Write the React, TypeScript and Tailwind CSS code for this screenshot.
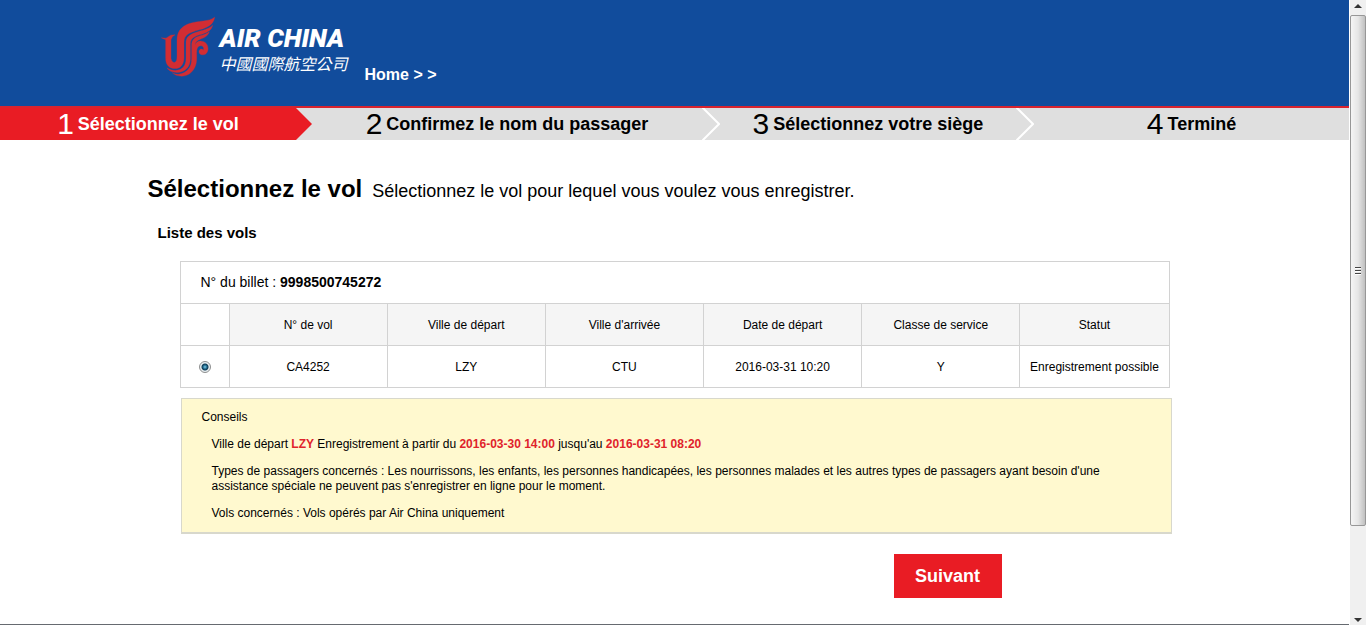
import { useState } from "react"

interface Flight {
  id: string
  from: string
  to: string
  date: string
  cabin: string
  status: string
}

const steps = ["Sélectionnez le vol", "Confirmez le nom du passager", "Sélectionnez votre siège", "Terminé"]

const columns = ["N° de vol", "Ville de départ", "Ville d'arrivée", "Date de départ", "Classe de service", "Statut"]

const flights: Flight[] = [
  { id: "CA4252", from: "LZY", to: "CTU", date: "2016-03-31 10:20", cabin: "Y", status: "Enregistrement possible" },
]

function Phoenix() {
  return (
    <svg
      viewBox="30 50 168 185"
      className="h-[62px] w-14 shrink-0"
      fill="#d22d33"
      stroke="#d22d33"
      strokeWidth="1"
      aria-hidden="true"
    >
      <path d="M34 115 L48 116 L62 107 L75 106 L67 112 L63 121 V176 Q65 189 74 189 Q81 187 81 172 V124 C81 98 92 82 116 73 C146 62 176 68 194 53 C191 74 176 83 148 91 C116 100 103 106 102 128 V176 C101 197 90 207 76 207 C58 207 47 197 47 176 V121 Z" />
      <path d="M188 77 C185 93 170 100 149 106 C128 113 121 119 121 136 V180 C120 204 103 219 81 219 C66 219 56 214 51 205 C59 211 67 213 76 213 C98 212 108 198 108 178 V130 C108 112 118 104 146 96 C166 90 179 86 188 77 Z" />
      <path d="M178 97 C174 110 163 115 151 119 C141 123 136 128 135 136 C138 128 146 124 154 125 C167 126 175 136 174 149 C173 161 165 167 156 166 C149 165 145 158 148 152 C151 147 158 148 160 152 C163 145 159 139 152 139 C142 140 140 149 140 163 V181 C138 212 118 230 95 230 C83 230 73 226 67 220 C73 224 80 225 87 224 C110 221 125 204 125 178 V138 C125 120 134 114 150 109 C162 106 171 102 178 97 Z" />
    </svg>
  )
}

function Header() {
  return (
    <header className="border-b-2 border-[#d9232e] bg-[#114c9c] px-4">
      <div className="mx-auto flex h-[106px] max-w-[1054px] items-start pt-4 pl-3">
        <Phoenix />
        <div className="ml-1 w-[129px] text-white">
          <div className="pt-[9px] font-[Roboto,'Liberation_Sans',sans-serif] text-[26px] leading-[26px] font-black whitespace-nowrap italic">
            AIR CHINA
          </div>
          <div className="font-['Noto_Sans_CJK_TC',sans-serif] text-[16px] leading-[24px] font-normal whitespace-nowrap italic">
            中國國際航空公司
          </div>
        </div>
        <a href="#" className="mt-[50px] ml-4 text-[16px] leading-[18px] font-bold text-white">
          Home &gt; &gt;
        </a>
      </div>
    </header>
  )
}

function Steps() {
  return (
    <ol className="grid h-8 grid-cols-[312fr_408fr_314fr_315fr] bg-[#dfdfdf]">
      {steps.map((label, i) => (
        <li key={label} className="flex">
          <div
            className={
              i === 0
                ? "flex flex-1 items-center justify-center gap-1 bg-[#e91c24] text-white"
                : "flex flex-1 items-center justify-center gap-1 text-black"
            }
          >
            <span className="text-[30px] leading-8">{i + 1}</span>
            <span className="text-[18px] leading-8 font-bold whitespace-nowrap">{label}</span>
          </div>
          {i < steps.length - 1 && (
            <svg viewBox="0 0 18 32" className={i === 0 ? "h-8 w-4" : "h-8 w-[18px]"} preserveAspectRatio="none" aria-hidden="true">
              {i === 0 ? (
                <path d="M0 0 L18 16 L0 32 Z" fill="#e91c24" />
              ) : (
                <path d="M0 -1 L17 16 L0 33" fill="none" stroke="#fff" strokeWidth="2" />
              )}
            </svg>
          )}
        </li>
      ))}
    </ol>
  )
}

function FlightTable() {
  const [selected, setSelected] = useState("CA4252")

  return (
    <table className="w-full table-fixed border-collapse border border-[#d2d2d2] text-center text-[12px]">
      <colgroup>
        <col className="w-[49px]" />
        <col />
        <col />
        <col />
        <col />
        <col />
        <col className="w-[149px]" />
      </colgroup>
      <thead>
        <tr className="h-[42px]">
          <th colSpan={7} className="pl-5 text-left text-[14px] font-normal">
            N° du billet : <strong>9998500745272</strong>
          </th>
        </tr>
        <tr className="h-[42px]">
          <td className="border border-[#d2d2d2]" />
          {columns.map((c) => (
            <th key={c} scope="col" className="border border-[#d2d2d2] bg-[#f5f5f5] font-normal">
              {c}
            </th>
          ))}
        </tr>
      </thead>
      <tbody>
        {flights.map((f) => (
          <tr key={f.id} className="h-[42px]">
            <td className="border border-[#d2d2d2]">
              <input
                type="radio"
                name="flight"
                aria-label={f.id}
                checked={selected === f.id}
                onChange={() => setSelected(f.id)}
                className="mx-auto block size-3 appearance-none rounded-full border border-[#8e8f8f] bg-white checked:bg-[radial-gradient(circle,#7fd0ee_0,#1b6285_2px,#123c55_3px,#e8eef1_4px)]"
              />
            </td>
            <td className="border border-[#d2d2d2]">{f.id}</td>
            <td className="border border-[#d2d2d2]">{f.from}</td>
            <td className="border border-[#d2d2d2]">{f.to}</td>
            <td className="border border-[#d2d2d2]">{f.date}</td>
            <td className="border border-[#d2d2d2]">{f.cabin}</td>
            <td className="border border-[#d2d2d2] whitespace-nowrap">{f.status}</td>
          </tr>
        ))}
      </tbody>
    </table>
  )
}

function Advice() {
  return (
    <section className="mt-[10px] -mr-0.5 ml-px border border-b-2 border-[#d8d8cc] bg-[#fff9cf] px-5 py-[11px] text-[12px] leading-[15px]">
      <h3>Conseils</h3>
      <div className="mt-3 space-y-3 pl-[10px]">
        <p>
          Ville de départ <b className="text-[#e0232b]">LZY</b> Enregistrement à partir du{" "}
          <b className="text-[#e0232b]">2016-03-30 14:00</b> jusqu'au <b className="text-[#e0232b]">2016-03-31 08:20</b>
        </p>
        <p>
          Types de passagers concernés : Les nourrissons, les enfants, les personnes handicapées, les personnes malades
          et les autres types de passagers ayant besoin d'une assistance spéciale ne peuvent pas s'enregistrer en ligne
          pour le moment.
        </p>
        <p>Vols concernés : Vols opérés par Air China uniquement</p>
      </div>
    </section>
  )
}

function Scrollbar() {
  return (
    <div className="ml-px flex w-4 shrink-0 flex-col bg-[#f0f0f0]" aria-hidden="true">
      <svg viewBox="0 0 16 15" className="h-[15px] w-4">
        <path d="M4 8 L8 4 L12 8 Z" fill="#333" />
      </svg>
      <div className="flex grow-[510] flex-col items-center justify-center gap-px rounded-xs border border-[#979797] bg-linear-to-r from-[#f5f5f5] via-[#e6e6e6] to-[#c0c0c0]">
        <div className="h-0.5 w-1.5 border-t border-[#444] bg-white" />
        <div className="h-0.5 w-1.5 border-t border-[#444] bg-white" />
        <div className="h-0.5 w-1.5 border-t border-[#444] bg-white" />
      </div>
      <div className="grow-[85]" />
      <svg viewBox="0 0 16 15" className="h-[15px] w-4">
        <path d="M4 8 L8 12 L12 8 Z" fill="#333" />
      </svg>
    </div>
  )
}

export default function App() {
  return (
    <div className="flex min-h-screen bg-white font-['Liberation_Sans',Arial,sans-serif] text-black">
      <div className="flex min-w-0 flex-1 flex-col border-b border-[#666a70]">
        <Header />
        <Steps />
        <main className="px-4 pb-6">
          <div className="mx-auto max-w-[1054px]">
            <div className="flex items-baseline gap-[10px] pt-[34px]">
              <h1 className="text-[24px] leading-[30px] font-bold">Sélectionnez le vol</h1>
              <p className="text-[18px] leading-[30px]">Sélectionnez le vol pour lequel vous voulez vous enregistrer.</p>
            </div>
            <h2 className="mt-[18px] pl-[10px] text-[15px] leading-[18px] font-bold">Liste des vols</h2>
            <div className="mt-[19px] px-8">
              <FlightTable />
              <Advice />
              <div className="mt-5 flex justify-end pr-[168px]">
                <button type="button" className="h-11 w-[108px] bg-[#e91c24] text-[18px] font-bold text-white">
                  Suivant
                </button>
              </div>
            </div>
          </div>
        </main>
      </div>
      <Scrollbar />
    </div>
  )
}
